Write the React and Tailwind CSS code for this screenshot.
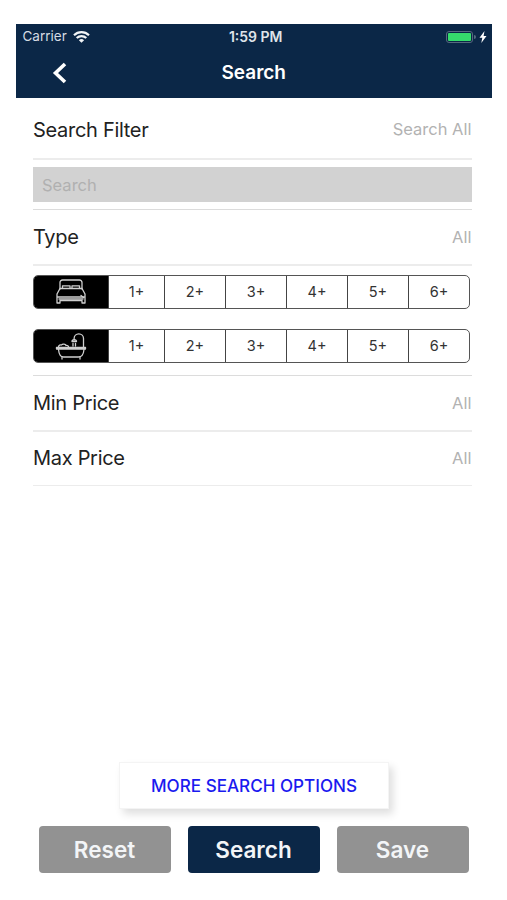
import React from 'react';

const counts = ['1+', '2+', '3+', '4+', '5+', '6+'];

function BedIcon() {
  return (
    <svg className="h-[26px] w-[32px]" viewBox="0 0 32 26" fill="none" stroke="#cfcfcf" strokeWidth="1.3" strokeLinecap="round" strokeLinejoin="round">
      <path d="M5 10V3.500A2.500 2.500 0 0 1 7.500 1h17A2.500 2.500 0 0 1 27 3.500V10" />
      <path d="M7.500 9V6.800h7.500V9M17 9V6.800h7.500V9" />
      <path d="M5 9.500h22M5 9.500L2 15v9h3v-2.500h22V24h3v-9l-3-5.500" />
      <path d="M2.500 18h27M4 20h24" />
      <path d="M26 16.500l2.500 2" />
    </svg>
  );
}

function BathIcon() {
  return (
    <svg className="h-[28px] w-[32px]" viewBox="0 0 32 28" fill="none" stroke="#cfcfcf" strokeWidth="1.3" strokeLinecap="round" strokeLinejoin="round">
      <path d="M1.500 15.500h29V17h-29z" />
      <path d="M3.500 17.500c.5 5 2 7.500 5 7.500h15c3 0 5-2.500 5.500-7.500" />
      <path d="M7 25v2M25 25v2" />
      <path d="M3.500 15c0-2 2-2.500 3-2 1-1.500 4-1 4.500.500 1.500-.5 2.500.500 2.500 1.500" />
      <path d="M28.500 15V6.500a4.700 4.700 0 0 0-9.400 0V8" />
      <path d="M17 9.500c0-2.500 4.500-2.500 4.500 0zM18 11.500v2.500M20.500 11.500v2.500" />
    </svg>
  );
}

function Row({ label, value, className }) {
  return (
    <div className={`flex items-center justify-between border-[#ececec] ${className}`}>
      <span className="text-[20px] tracking-[-0.3px] text-[#222]">{label}</span>
      <span className="text-[16.500px] text-[#b2b2b2]">{value}</span>
    </div>
  );
}

function Segments({ icon }) {
  return (
    <div className="flex h-[34px] w-[437px] overflow-hidden rounded-[5px] border border-[#555] bg-white">
      <div className="flex w-[74px] items-center justify-center bg-black">{icon}</div>
      {counts.map((count, i) => (
        <button
          key={count}
          className={`border-l border-[#444] text-[14.500px] text-[#333] ${i === 0 ? 'w-[56px]' : 'w-[61px]'}`}
        >
          {count}
        </button>
      ))}
    </div>
  );
}

export default function App() {
  return (
    <div className="flex h-[900px] w-[507px] flex-col bg-white pt-[24px] font-['Inter',sans-serif]">
      {/* Header */}
      <header className="ml-[15.500px] h-[74px] w-[476.500px] bg-[#0b2747] text-white">
        <div className="grid h-[25px] grid-cols-3 items-center pr-[5px] pl-[7px]">
          <div className="flex items-center gap-[6px] text-[13.500px] text-[#d5dbe3]">
            <span>Carrier</span>
            <svg className="h-[12px] w-[17px]" viewBox="0 0 17 12" fill="none" stroke="#f1f4f7" strokeWidth="2.200">
              <path d="M1 4.200a10.800 10.800 0 0 1 15 0" />
              <path d="M3.700 7a7 7 0 0 1 9.600 0" />
              <path d="M8.500 11.800L5.900 9.200a3.700 3.700 0 0 1 5.200 0z" fill="#f1f4f7" stroke="none" />
            </svg>
          </div>
          <span className="pl-[2px] text-center text-[14px] font-semibold text-[#dfe4ea]">1:59 PM</span>
          <div className="flex items-center justify-end">
            <div className="h-[12px] w-[27px] rounded-[3px] border border-[#56697f] p-px">
              <div className="h-full rounded-[1px] bg-[#35dc6c]" />
            </div>
            <div className="ml-px h-[4px] w-[2px] rounded-r-full bg-[#56697f]" />
            <svg className="ml-[3px] h-[12px] w-[8px]" viewBox="0 0 8 12" fill="#fff">
              <path d="M5.500 0L.5 6.800h2.800L2.300 12l5.200-7H4.600z" />
            </svg>
          </div>
        </div>
        <div className="grid h-[49px] grid-cols-3 items-center">
          <svg className="mb-px ml-[36px] h-[22px] w-[16px]" viewBox="0 0 16 22" fill="none" stroke="#fff" strokeWidth="3.600">
            <path d="M13 2L3.500 11 13 20" />
          </svg>
          <h1 className="text-center text-[19px] font-semibold">Search</h1>
        </div>
      </header>

      {/* Filters */}
      <main className="ml-[33px] w-[438.500px]">
        <Row label="Search Filter" value="Search All" className="h-[62px] border-b-2 pt-[3px]" />
        <div className="h-[50px] border-b border-[#dcdcdc] pt-[7px]">
          <input
            type="text"
            placeholder="Search"
            className="h-[35px] w-full bg-[#d2d2d2] px-[9px] text-[16.500px] placeholder:text-[#b0b0b0]"
          />
        </div>
        <Row label="Type" value="All" className="h-[56px] border-b-2" />
        <div className="flex h-[110px] flex-col gap-[20px] border-b border-[#dcdcdc] pt-[9px]">
          <Segments icon={<BedIcon />} />
          <Segments icon={<BathIcon />} />
        </div>
        <Row label="Min Price" value="All" className="h-[56px] border-b-2" />
        <Row label="Max Price" value="All" className="h-[54px] border-b pb-px" />
      </main>

      {/* Actions */}
      <footer className="mt-auto mb-[27px] flex flex-col">
        <button className="ml-[119px] h-[47px] w-[270px] border border-[#f4f4f4] bg-white text-[17.100px] font-medium text-[#1a1aef] shadow-[4px_5px_8px_rgba(0,0,0,0.13)]">
          MORE SEARCH OPTIONS
        </button>
        <div className="mt-[17px] ml-[38.500px] flex gap-[17px] text-[22.500px] font-semibold text-[#f3f5f7]">
          <button className="h-[47px] w-[132px] rounded-[4px] bg-[#929292]">Reset</button>
          <button className="h-[47px] w-[132px] rounded-[4px] bg-[#0b2747]">Search</button>
          <button className="h-[47px] w-[132px] rounded-[4px] bg-[#929292]">Save</button>
        </div>
      </footer>
    </div>
  );
}
